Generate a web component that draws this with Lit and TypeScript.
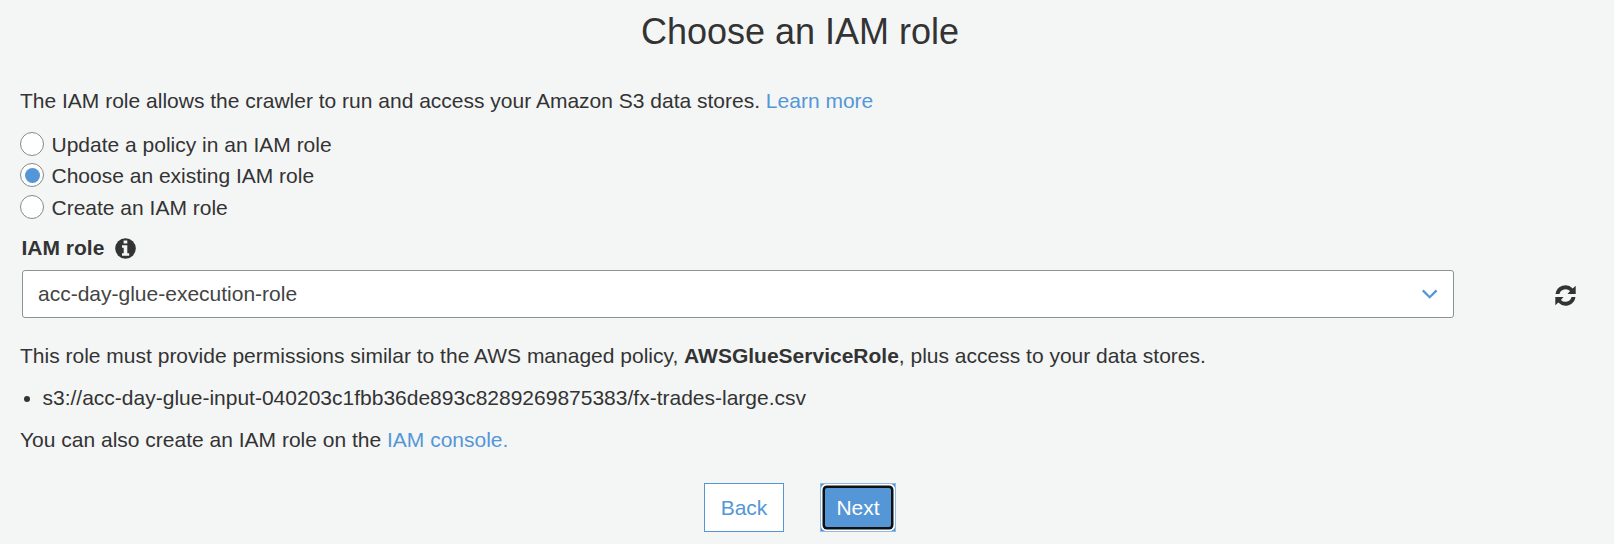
import { LitElement, html, css } from "lit";
import { customElement, state } from "lit/decorators.js";
import { classMap } from "lit/directives/class-map.js";

@customElement("app-root")
export class AppRoot extends LitElement {
  static styles = css`
    :host {
      display: block;
      box-sizing: border-box;
      width: 100%;
      height: 544px;
      padding: 12px 14px 0 20px;
      overflow: hidden;
      background: #f4f6f6;
      color: #333;
      font: 21px/30px "Liberation Sans", Arial, sans-serif;
    }
    .title {
      margin: 0 20px 34px 0;
      font-size: 36px;
      line-height: 40px;
      font-weight: 400;
      text-align: center;
    }
    .text { margin: 0; white-space: nowrap; }
    .link { color: #5496d6; text-decoration: none; }
    .options { display: grid; grid-template-rows: 31px 32px 30px; margin-top: 14px; }
    .option { display: flex; align-items: flex-start; cursor: pointer; }
    .radio {
      box-sizing: border-box;
      display: grid;
      place-items: center;
      width: 24px;
      height: 24px;
      margin: 2px 7.5px 0 0;
      border: 1px solid #858a8a;
      border-radius: 50%;
      background: #fff;
    }
    .radio.on::after {
      content: "";
      width: 15px;
      height: 15px;
      margin: 1px 0 0 1px;
      border-radius: 50%;
      background: #5496d6;
    }
    .label { display: flex; align-items: center; gap: 11px; margin: 10px 0 7px 1.5px; height: 30px; font-weight: 700; }
    .info { display: block; margin: 1px 0 0 -0.5px; }
    .field { display: flex; align-items: center; justify-content: space-between; margin: 0 24px 0 2px; }
    .select {
      box-sizing: border-box;
      display: flex;
      align-items: center;
      justify-content: space-between;
      width: 1432px;
      height: 48px;
      padding: 0 15px;
      border: 1px solid #8a9494;
      border-radius: 3px;
      background: #fff;
      color: #444;
    }
    .refresh { display: block; margin-top: 3px; }
    .policy { margin-top: 23px; }
    .stores { margin: 12px 0; padding: 0 0 0 22.5px; list-style: none; }
    .store { display: flex; align-items: center; white-space: nowrap; }
    .store::before {
      content: "";
      width: 6px;
      height: 6px;
      margin: 2px 12.5px 0 -18.5px;
      border-radius: 50%;
      background: #333;
    }
    .actions { display: flex; justify-content: center; gap: 36px; margin: 28px 20px 0 0; }
    .button {
      box-sizing: border-box;
      height: 49px;
      padding: 0;
      border: 1px solid #5496d6;
      font: inherit;
    }
    .back { width: 80px; background: #fff; color: #5496d6; }
    .next { width: 76px; background: #5496d6; color: #fff; display: grid; border-color: #8fbbe6; }
    .ring {
      box-sizing: border-box;
      display: grid;
      place-items: center;
      border: 2px solid #fff;
      border-radius: 5px;
      background: #fff;
    }
    .face {
      box-sizing: border-box;
      width: 100%;
      height: 100%;
      border: 2px solid #101010;
      box-shadow: 0 0 0 0.5px #101010;
      border-radius: 4px;
      background: #5496d6;
      line-height: 39px;
    }
  `;

  @state() private selected = 1;

  private choices = ["Update a policy in an IAM role", "Choose an existing IAM role", "Create an IAM role"];

  render() {
    return html`
      <h1 class="title">Choose an IAM role</h1>
      <p class="text">The IAM role allows the crawler to run and access your Amazon S3 data stores. <a class="link">Learn more</a></p>
      <div class="options" role="radiogroup">
        ${this.choices.map(
          (name, i) => html`<div class="option" role="radio" aria-checked=${i === this.selected} @click=${() => (this.selected = i)}>
            <span class=${classMap({ radio: true, on: i === this.selected })}></span><span>${name}</span>
          </div>`
        )}
      </div>
      <div class="label">
        <span>IAM role</span>
        <svg class="info" width="21" height="21" viewBox="0 0 21 21">
          <circle cx="10.5" cy="10.500" r="10.300" fill="#333" />
          <path fill="#f4f6f6" d="M8.600 2.500h3.700v3H8.600zM7 7.300h5.300v7.900h1.900v2.500H7v-2.500h1.700V9.800H7z" />
        </svg>
      </div>
      <div class="field">
        <div class="select">
          <span>acc-day-glue-execution-role</span>
          <svg width="16" height="10" viewBox="0 0 16 10"><path d="M.800 1.400l6.900 6.900 6.900-6.900" fill="none" stroke="#5496d6" stroke-width="2.200" /></svg>
        </div>
        <svg class="refresh" width="21" height="21" viewBox="0 0 21 21" fill="#333">
          <path d="M.500 9A10.100 10.100 0 0 1 17.700 3.400L20.700.700V9h-8.200l2.600-2.900A6.400 6.400 0 0 0 4.400 9z" />
          <path transform="rotate(180 10.5 10.5)" d="M.500 9A10.100 10.100 0 0 1 17.700 3.400L20.700.700V9h-8.200l2.600-2.900A6.400 6.400 0 0 0 4.400 9z" />
        </svg>
      </div>
      <p class="text policy">This role must provide permissions similar to the AWS managed policy, <b>AWSGlueServiceRole</b>, plus access to your data stores.</p>
      <ul class="stores">
        <li class="store">s3://acc-day-glue-input-040203c1fbb36de893c8289269875383/fx-trades-large.csv</li>
      </ul>
      <p class="text">You can also create an IAM role on the <a class="link">IAM console.</a></p>
      <div class="actions">
        <button class="button back">Back</button>
        <button class="button next"><span class="ring"><span class="face">Next</span></span></button>
      </div>
    `;
  }
}
